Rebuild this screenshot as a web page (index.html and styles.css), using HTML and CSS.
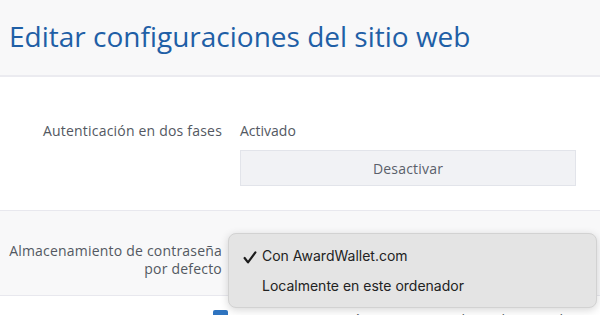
FILE: index.html
```html
<!DOCTYPE html>
<html>
	<head>
		<meta charset="UTF-8">
		<title>Editar configuraciones del sitio web</title>
		<link rel="stylesheet" href="styles.css">
	</head>
	<body>
		<div class="header">
			<h1 class="title">Editar configuraciones del sitio web</h1>
		</div>
		<div class="row row-auth">
			<div class="label">Autenticación en dos fases</div>
			<div class="value">
				<div class="status">Activado</div>
				<button class="btn">Desactivar</button>
			</div>
		</div>
		<div class="row row-store">
			<div class="label">Almacenamiento de contraseña<br>por defecto</div>
			<div class="value">
				<div class="menu">
					<div class="menu-item">
						<svg class="check" width="14" height="13" viewBox="0 0 14 13">
							<path d="M1.6 7 L5 11.4 L12.4 1.4" fill="none" stroke="#1c1c1c" stroke-width="2.2" stroke-linecap="round" stroke-linejoin="round"/>
						</svg>
						Con AwardWallet.com
					</div>
					<div class="menu-item">Localmente en este ordenador</div>
				</div>
			</div>
		</div>
		<div class="row-share">
			<span class="box"></span>
			<span class="share-text">Compartir automáticamente mis datos de inicio de sesión</span>
		</div>
	</body>
</html>
```

FILE: styles.css
```css
body {
	margin: 0;
	padding: 0;
	font-family: "Open Sans", sans-serif;
	background: #fff;
	overflow: hidden;
}
.header {
	height: 75px;
	background: #f8f8f9;
	border-bottom: 2px solid #ebebf0;
	padding-left: 9px;
}
.title {
	margin: 0;
	padding-top: 17px;
	font-size: 28px;
	font-weight: 400;
	line-height: 38px;
	color: #1f5fa6;
}
.row {
	display: grid;
	grid-template-columns: 222px 1fr;
	column-gap: 18px;
	padding-right: 24px;
	border-bottom: 1px solid #e8e8ee;
	font-size: 14px;
	color: #535862;
}
.label {
	text-align: right;
	letter-spacing: 0.2px;
}
.row-auth {
	padding-top: 44px;
	padding-bottom: 24px;
	line-height: 20px;
}
.btn {
	display: block;
	width: 100%;
	height: 36px;
	margin-top: 9px;
	background: #f1f2f5;
	border: 1px solid #e2e4ea;
	font-family: "Open Sans", sans-serif;
	font-size: 14px;
	letter-spacing: 0.2px;
	color: #5a5f6b;
	padding: 0;
}
.row-store {
	background: #f8f8f9;
	height: 85px;
	box-sizing: border-box;
	padding-top: 31px;
	line-height: 18px;
}
.row-store .value {
	position: relative;
}
.menu {
	position: absolute;
	left: -12px;
	top: -9px;
	width: 369px;
	height: 75px;
	box-sizing: border-box;
	background: #e4e4e4;
	border: 1px solid #d2d2d2;
	border-radius: 8px;
	box-shadow: 0 2px 8px rgba(0, 0, 0, 0.16);
	padding-top: 7px;
	font-family: Inter, sans-serif;
	font-size: 14px;
	color: #222;
	z-index: 2;
}
.menu-item {
	position: relative;
	height: 30px;
	line-height: 30px;
	padding-left: 33px;
}
.check {
	position: absolute;
	left: 14px;
	top: 10px;
}
.row-share {
	display: flex;
	align-items: flex-start;
	gap: 12px;
	padding-left: 213px;
	padding-top: 14px;
	font-size: 14px;
	line-height: 20px;
	color: #535862;
}
.box {
	flex: none;
	width: 15px;
	height: 15px;
	border-radius: 2px;
	background: #2f74c0;
}
.share-text {
	margin-top: 0;
	white-space: nowrap;
}
```
